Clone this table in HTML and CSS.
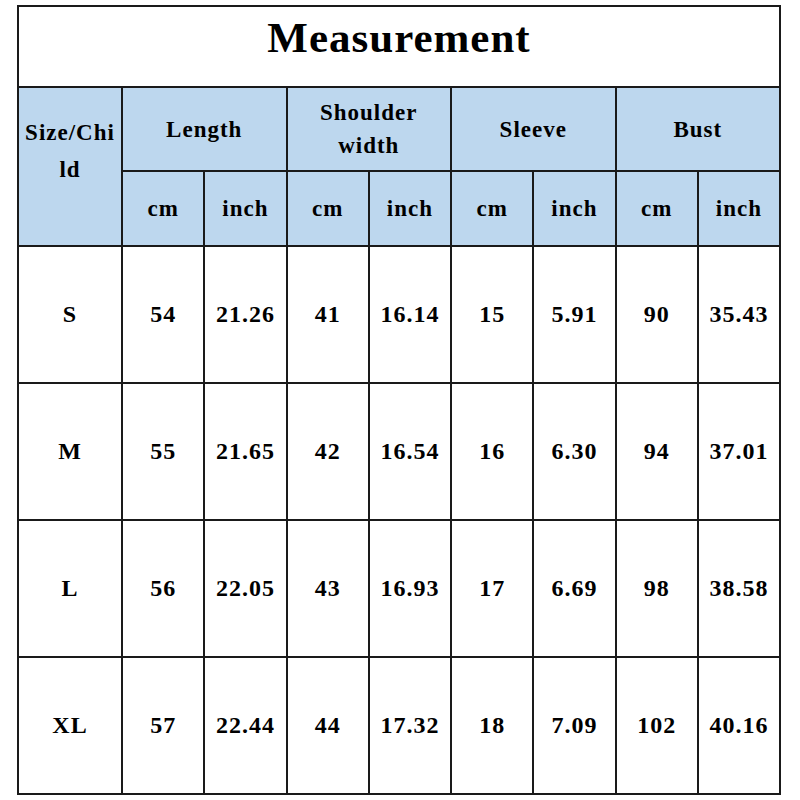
FILE: index.html
```html
<!DOCTYPE html>
<html lang="en">

<head>
  <meta charset="UTF-8" />
  <meta name="viewport" content="width=device-width, initial-scale=1.0" />
  <title>Measurement</title>
  <link rel="stylesheet" href="styles.css">
</head>

<body>
  <table class="size-table">
    <colgroup>
      <col class="col-size" />
      <col span="8" class="col-val" />
    </colgroup>
    <thead>
      <tr class="title-row">
        <th colspan="9">Measurement</th>
      </tr>
      <tr class="head-row">
        <th rowspan="2">Size/Chi<br>ld</th>
        <th colspan="2">Length</th>
        <th colspan="2">Shoulder<br>width</th>
        <th colspan="2">Sleeve</th>
        <th colspan="2">Bust</th>
      </tr>
      <tr class="unit-row">
        <th>cm</th>
        <th>inch</th>
        <th>cm</th>
        <th>inch</th>
        <th>cm</th>
        <th>inch</th>
        <th>cm</th>
        <th>inch</th>
      </tr>
    </thead>
    <tbody>
      <tr>
        <td>S</td>
        <td>54</td>
        <td>21.26</td>
        <td>41</td>
        <td>16.14</td>
        <td>15</td>
        <td>5.91</td>
        <td>90</td>
        <td>35.43</td>
      </tr>
      <tr>
        <td>M</td>
        <td>55</td>
        <td>21.65</td>
        <td>42</td>
        <td>16.54</td>
        <td>16</td>
        <td>6.30</td>
        <td>94</td>
        <td>37.01</td>
      </tr>
      <tr>
        <td>L</td>
        <td>56</td>
        <td>22.05</td>
        <td>43</td>
        <td>16.93</td>
        <td>17</td>
        <td>6.69</td>
        <td>98</td>
        <td>38.58</td>
      </tr>
      <tr>
        <td>XL</td>
        <td>57</td>
        <td>22.44</td>
        <td>44</td>
        <td>17.32</td>
        <td>18</td>
        <td>7.09</td>
        <td>102</td>
        <td>40.16</td>
      </tr>
    </tbody>
  </table>
</body>

</html>
```

FILE: styles.css
```css
* {
  margin: 0;
  padding: 0;
  box-sizing: border-box;
}

body {
  background: #fff;
  font-family: "Liberation Serif", "Times New Roman", serif;
  color: #000;
}

.size-table {
  margin: 5px 0 0 17px;
  width: 764px;
  table-layout: fixed;
  border-collapse: collapse;
  border: 2px solid #1a1a1a;
}

.col-size {
  width: 104px;
}

.size-table th,
.size-table td {
  border: 2px solid #1a1a1a;
  text-align: center;
  vertical-align: middle;
  font-weight: bold;
  font-size: 23px;
  letter-spacing: 1px;
}

.title-row th {
  height: 81px;
  font-size: 43px;
  letter-spacing: 1px;
  padding-bottom: 18px;
  background: #fff;
}

.head-row th {
  height: 84px;
  line-height: 33px;
  background: #bdd7ee;
}

.head-row th:first-child {
  line-height: 37px;
  padding: 0 0 32px;
}

.unit-row th {
  height: 75px;
  background: #bdd7ee;
}

.size-table tbody td {
  height: 137px;
  font-size: 24px;
}
```
